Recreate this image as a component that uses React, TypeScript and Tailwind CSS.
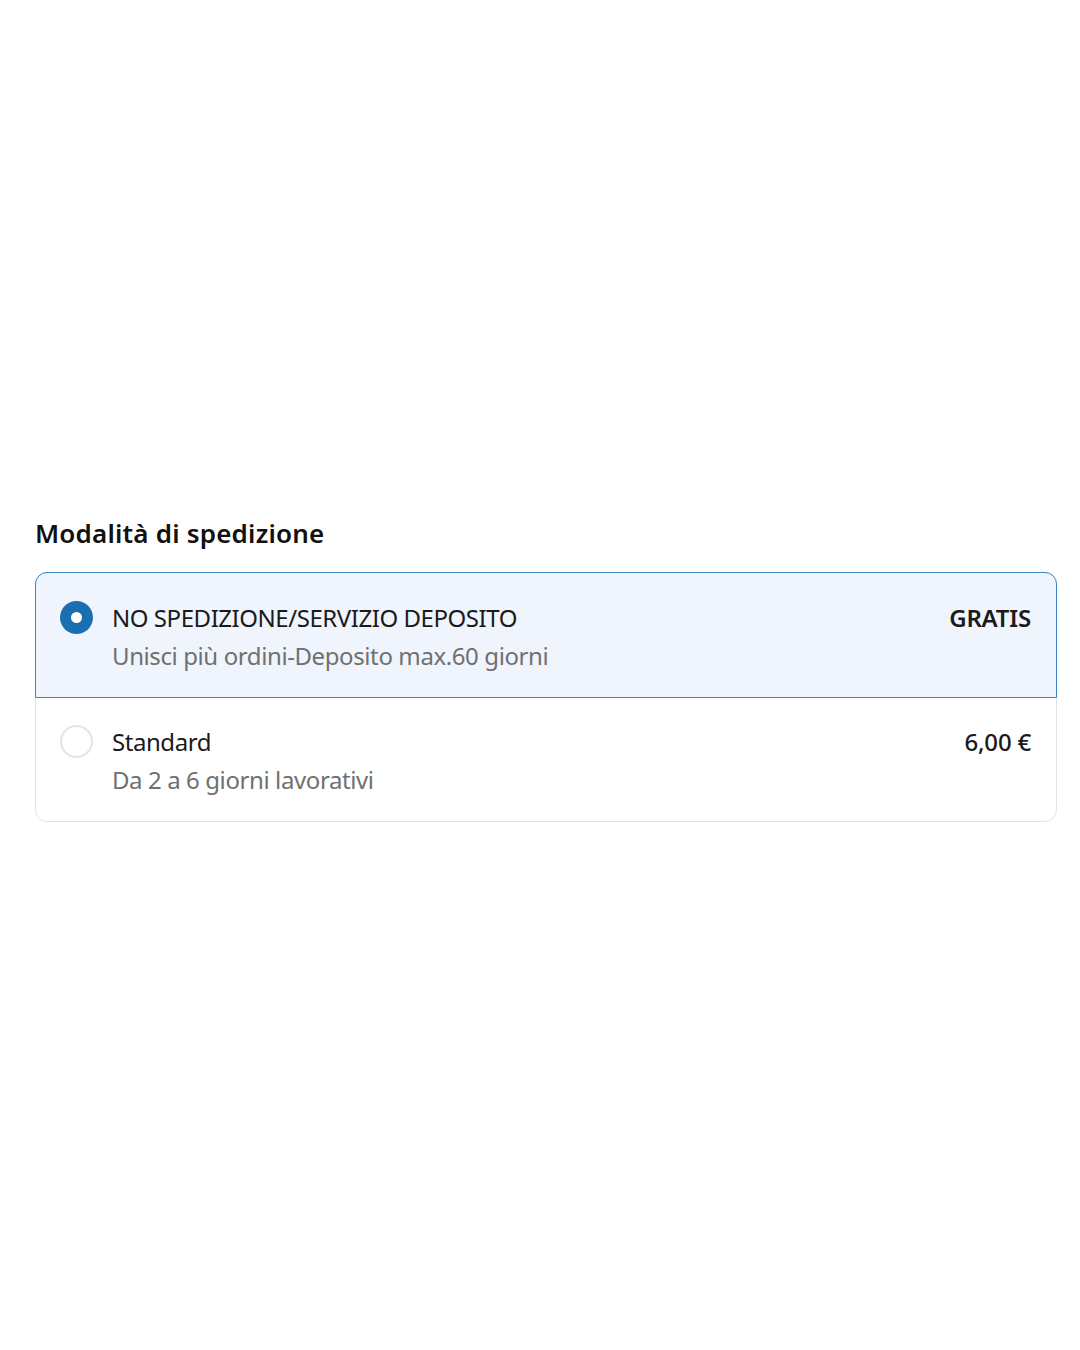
import React, { useState } from 'react';

interface ShippingOption {
  id: string;
  title: string;
  subtitle: string;
  price: string;
}

const options: ShippingOption[] = [
  {
    id: 'deposito',
    title: 'NO SPEDIZIONE/SERVIZIO DEPOSITO',
    subtitle: 'Unisci più ordini-Deposito max.60 giorni',
    price: 'GRATIS',
  },
  {
    id: 'standard',
    title: 'Standard',
    subtitle: 'Da 2 a 6 giorni lavorativi',
    price: '6,00 €',
  },
];

const App: React.FC = () => {
  const [selected, setSelected] = useState<string>('deposito');

  return (
    <div
      className="min-h-[1350px] bg-white flex flex-col justify-center pl-[35px] pr-[23px] pb-[14px]"
      style={{ fontFamily: '"Noto Sans", "Open Sans", sans-serif' }}
    >
      {/* titolo */}
      <h2 className="text-[26px] font-semibold text-[#111] leading-[36px] mb-[21px] tracking-[0.2px]">
        Modalità di spedizione
      </h2>

      {/* opzioni */}
      <div className="rounded-[12px] border border-[#e2e2e2] flex flex-col">
        {options.map((opt, i) => {
          const active = selected === opt.id;
          return (
            <div
              key={opt.id}
              onClick={() => setSelected(opt.id)}
              className={`flex items-start pl-[24px] pr-[25px] pt-[26px] pb-[22px] cursor-pointer -m-px ${
                active ? 'bg-[#eff4fd] border border-[#3d87c6] z-10' : 'border border-transparent'
              } ${i === 0 ? 'rounded-t-[12px]' : ''} ${i === options.length - 1 ? 'rounded-b-[12px]' : ''}`}
            >
              <div className="h-[38px] flex items-center shrink-0">
                {active ? (
                  <div className="w-[33px] h-[33px] rounded-full bg-[#1b6fb0] flex items-center justify-center">
                    <div className="w-[11px] h-[11px] rounded-full bg-white" />
                  </div>
                ) : (
                  <div className="w-[33px] h-[33px] rounded-full bg-white border-2 border-[#e4e4e4]" />
                )}
              </div>
              <div className="flex-1 ml-[19px]">
                <div className="text-[24px] leading-[38px] text-[#1a1a1a] tracking-[-0.45px]">{opt.title}</div>
                <div className="text-[24px] leading-[38px] text-[#707070] tracking-[-0.4px]">{opt.subtitle}</div>
              </div>
              <div
                className={`text-[24px] leading-[38px] text-[#1a1a1a] tracking-[-0.2px] ${
                  active ? 'font-semibold' : 'font-medium'
                }`}
              >
                {opt.price}
              </div>
            </div>
          );
        })}
      </div>
    </div>
  );
};

export default App;
